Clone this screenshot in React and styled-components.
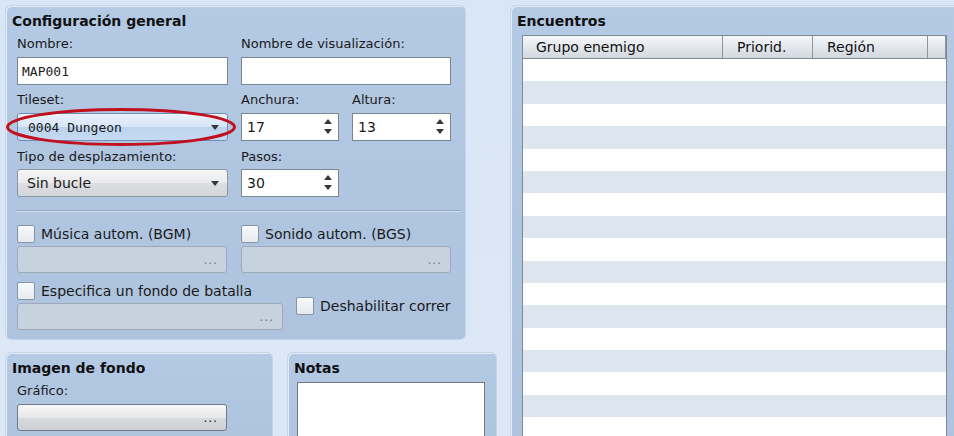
import React from 'react'
import styled, { createGlobalStyle } from 'styled-components'

const Global = createGlobalStyle`
  html, body {
    margin: 0;
    padding: 0;
    height: 100%;
    overflow: hidden;
  }
  body {
    background: linear-gradient(#d9e6f7, #dde8f6);
    font-family: "DejaVu Sans", "Liberation Sans", sans-serif;
    color: #1a1a1a;
  }
`

const Page = styled.div`
  display: flex;
  gap: 13px;
  padding: 5px 0 0 5px;
  height: 436px;
  box-sizing: border-box;
  overflow: hidden;
`

const LeftCol = styled.div`
  width: 492px;
  display: flex;
  flex-direction: column;
  gap: 12px;
`

const Panel = styled.div`
  box-sizing: border-box;
  width: ${p => p.w}px;
  height: ${p => p.h}px;
  flex-shrink: 0;
  background: linear-gradient(#b4c9e3, #adc3de);
  border: 1px solid #c5d6ec;
  box-shadow: inset 1px 1px 0 #e4ecf7;
  border-radius: 6px;
  padding: ${p => p.pad || '7px 14px 9px 11px'};
`

const Title = styled.div`
  font-weight: bold;
  font-size: 14px;
  line-height: 17px;
  margin-left: ${p => p.ml ?? -5}px;
  color: #111;
`

const Fields = styled.div`
  display: grid;
  grid-template-columns: 211px 98px 99px;
  column-gap: 13px;
  row-gap: 7px;
  margin-top: 6px;
`

const Field = styled.div`
  grid-column: span ${p => p.span || 1};
  display: flex;
  flex-direction: column;
`

const Label = styled.div`
  font-size: 13px;
  line-height: 16px;
  margin-top: ${p => p.mt ?? 0}px;
  margin-bottom: ${p => p.mb ?? 5}px;
  white-space: nowrap;
`

const TextBox = styled.div`
  box-sizing: border-box;
  height: 28px;
  background: #fff;
  border: 1px solid #7a8694;
  display: flex;
  align-items: center;
  padding-left: ${p => p.pl ?? 4}px;
  font-family: ${p => (p.mono ? '"DejaVu Sans Mono", monospace' : '"DejaVu Sans", sans-serif')};
  font-size: ${p => (p.mono ? 13 : 14)}px;
  position: relative;
`

const SpinArrows = styled.div`
  position: absolute;
  right: 6px;
  top: 5px;
  display: flex;
  flex-direction: column;
  gap: 5px;
`

const Tri = styled.div`
  width: 0;
  height: 0;
  border-left: 4px solid transparent;
  border-right: 4px solid transparent;
  ${p => (p.up ? 'border-bottom: 5px solid #33383e;' : 'border-top: 5px solid #33383e;')}
`

const Combo = styled.div`
  box-sizing: border-box;
  height: 28px;
  border-radius: 3px;
  border: 1px solid ${p => (p.active ? '#6f8fb6' : '#8c97a4')};
  background: ${p =>
    p.active
      ? 'linear-gradient(#eaf2fc 0%, #d6e5f7 50%, #bcd3ee 51%, #c6dbf2 100%)'
      : 'linear-gradient(#f6f6f6 0%, #e9eaec 50%, #dcdee1 51%, #d3d6da 100%)'};
  display: flex;
  align-items: center;
  justify-content: space-between;
  padding: 0 8px 0 ${p => (p.mono ? 10 : 9)}px;
  font-family: ${p => (p.mono ? '"DejaVu Sans Mono", monospace' : '"DejaVu Sans", sans-serif')};
  font-size: ${p => (p.mono ? 13 : 14)}px;
  position: relative;
`

const Ellipse = styled.svg`
  position: absolute;
  left: -12px;
  top: -7px;
  overflow: visible;
  pointer-events: none;
`

const Separator = styled.div`
  height: 1px;
  background: #94a7be;
  border-bottom: 1px solid #d4e0ee;
  margin: 13px -9px 13px -1px;
`

const CheckGrid = styled.div`
  display: grid;
  grid-template-columns: 210px 210px;
  column-gap: 14px;
`

const Check = styled.div`
  display: flex;
  align-items: center;
  gap: 6px;
  font-size: 14px;
  height: 18px;
  white-space: nowrap;
`

const Box = styled.div`
  box-sizing: border-box;
  width: 18px;
  height: 18px;
  border: 1px solid #8794a3;
  border-radius: 2px;
  background: linear-gradient(#f7f9fb, #e6eaef);
`

const PickBar = styled.div`
  box-sizing: border-box;
  width: ${p => p.w}px;
  height: 27px;
  margin-top: ${p => p.mt ?? 3}px;
  border-radius: 3px;
  border: 1px solid ${p => (p.enabled ? '#717b86' : '#9eaaba')};
  background: ${p =>
    p.enabled
      ? 'linear-gradient(#f7f7f7 0%, #e6e7e9 50%, #d8dadd 51%, #ccd0d5 100%)'
      : '#c7d2df'};
  display: flex;
  align-items: center;
  justify-content: flex-end;
  padding-right: 8px;
  font-size: 12px;
  letter-spacing: 1px;
  color: ${p => (p.enabled ? '#222' : '#6c7784')};
`

const BattleRow = styled.div`
  display: flex;
  align-items: center;
  gap: 13px;
  margin-top: 9px;
`

const BottomRow = styled.div`
  display: flex;
  gap: 14px;
`

const NotesArea = styled.div`
  box-sizing: border-box;
  width: 188px;
  height: 80px;
  margin-top: 5px;
  background: #fff;
  border: 1px solid #707a86;
`

const Table = styled.div`
  width: 423px;
  margin-top: 5px;
  border: 1px solid #7d8996;
  border-bottom: none;
  background: #fff;
`

const HeadRow = styled.div`
  display: grid;
  grid-template-columns: 200px 90px 115px 1fr;
  height: 22px;
  background: linear-gradient(#f5f7f9 0%, #e3e7ec 50%, #d2d8df 100%);
  border-bottom: 1px solid #7d8996;
`

const HeadCell = styled.div`
  font-size: 14px;
  line-height: 22px;
  padding-left: ${p => p.pl}px;
  border-right: 1px solid #8a95a2;
  white-space: nowrap;
  color: #111;
`

const Row = styled.div`
  height: 22.4px;
  background: ${p => (p.alt ? '#dde6ee' : '#ffffff')};
`

export default function App() {
  const rows = Array.from({ length: 17 }, (_, i) => i)
  return (
    <>
      <Global />
      <Page>
        <LeftCol>
          <Panel w={461} h={335}>
            <Title>Configuración general</Title>
            <Fields>
              <Field>
                <Label>Nombre:</Label>
                <TextBox mono>MAP001</TextBox>
              </Field>
              <Field span={2}>
                <Label>Nombre de visualización:</Label>
                <TextBox />
              </Field>
              <Field>
                <Label>Tileset:</Label>
                <Combo active mono>
                  0004 Dungeon
                  <Tri />
                  <Ellipse width="230" height="40">
                    <ellipse cx="115" cy="20" rx="113.5" ry="17.5" fill="none" stroke="#c0111f" strokeWidth="3" />
                  </Ellipse>
                </Combo>
              </Field>
              <Field>
                <Label>Anchura:</Label>
                <TextBox pl={5}>
                  17
                  <SpinArrows><Tri up /><Tri /></SpinArrows>
                </TextBox>
              </Field>
              <Field>
                <Label>Altura:</Label>
                <TextBox pl={5}>
                  13
                  <SpinArrows><Tri up /><Tri /></SpinArrows>
                </TextBox>
              </Field>
              <Field>
                <Label mt={1} mb={4}>Tipo de desplazamiento:</Label>
                <Combo>
                  Sin bucle
                  <Tri />
                </Combo>
              </Field>
              <Field>
                <Label mt={1} mb={4}>Pasos:</Label>
                <TextBox pl={5}>
                  30
                  <SpinArrows><Tri up /><Tri /></SpinArrows>
                </TextBox>
              </Field>
            </Fields>
            <Separator />
            <CheckGrid>
              <div>
                <Check><Box />Música autom. (BGM)</Check>
                <PickBar w={210}>...</PickBar>
              </div>
              <div>
                <Check><Box />Sonido autom. (BGS)</Check>
                <PickBar w={210}>...</PickBar>
              </div>
            </CheckGrid>
            <BattleRow>
              <div>
                <Check><Box />Especifica un fondo de batalla</Check>
                <PickBar w={266}>...</PickBar>
              </div>
              <Check><Box />Deshabilitar correr</Check>
            </BattleRow>
          </Panel>
          <BottomRow>
            <Panel w={268} h={100}>
              <Title>Imagen de fondo</Title>
              <Label mt={6} mb={0}>Gráfico:</Label>
              <PickBar w={210} enabled mt={5}>...</PickBar>
            </Panel>
            <Panel w={210} h={100} pad="7px 10px 0 9px">
              <Title ml={-3}>Notas</Title>
              <NotesArea />
            </Panel>
          </BottomRow>
        </LeftCol>
        <Panel w={450} h={450}>
          <Title>Encuentros</Title>
          <Table>
            <HeadRow>
              <HeadCell pl={13}>Grupo enemigo</HeadCell>
              <HeadCell pl={14}>Priorid.</HeadCell>
              <HeadCell pl={14}>Región</HeadCell>
              <HeadCell pl={0} />
            </HeadRow>
            {rows.map(i => (
              <Row key={i} alt={i % 2 === 1} />
            ))}
          </Table>
        </Panel>
      </Page>
    </>
  )
}
